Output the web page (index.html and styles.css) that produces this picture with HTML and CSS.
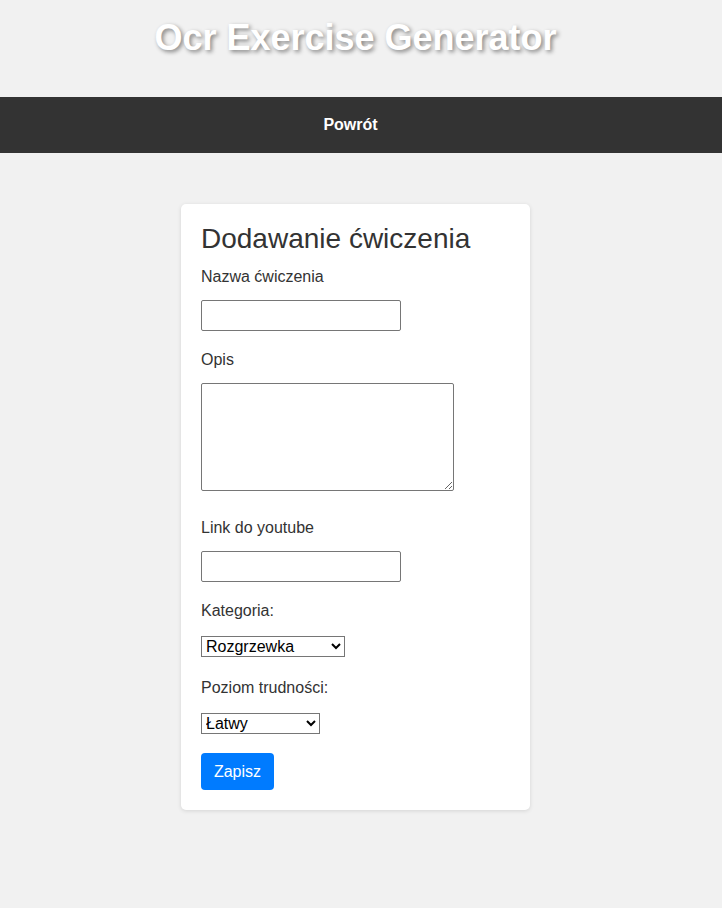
FILE: index.html
```html
<!DOCTYPE html>
<html lang="pl">
<head>
<meta charset="utf-8">
<title>Ocr Exercise Generator</title>
<link rel="stylesheet" href="styles.css">
</head>
<body>
<header class="header">
  <h1 class="title">Ocr Exercise Generator</h1>
</header>
<nav class="nav">
  <a class="nav-link" href="#">Powrót</a>
</nav>
<main class="main">
  <form class="card">
    <h2 class="card-title">Dodawanie ćwiczenia</h2>
    <label class="label l-first">Nazwa ćwiczenia</label>
    <input class="input" type="text">
    <label class="label l-after-input">Opis</label>
    <textarea class="textarea"></textarea>
    <label class="label l-after-textarea">Link do youtube</label>
    <input class="input" type="text">
    <label class="label l-after-input">Kategoria:</label>
    <select class="select select-cat"><option>Rozgrzewka</option></select>
    <label class="label l-after-select">Poziom trudności:</label>
    <select class="select select-level"><option>Łatwy</option></select>
    <button class="button" type="button">Zapisz</button>
  </form>
</main>
</body>
</html>
```
FILE: styles.css
```css
html, body {
  margin: 0;
  padding: 0;
}
body {
  background: #f1f1f1;
  font-family: "Liberation Sans", Arial, sans-serif;
  color: #333;
  height: 908px;
}
.header {
  padding-right: 11px;
  height: 97px;
  box-sizing: border-box;
  padding-top: 18px;
}
.title {
  margin: 0;
  text-align: center;
  color: #fff;
  font-size: 36px;
  font-weight: bold;
  line-height: 40px;
  text-shadow: 2px 2px 4px rgba(0, 0, 0, 0.45);
}
.nav {
  background: #333;
  height: 56px;
  display: flex;
  align-items: center;
  justify-content: center;
  padding-right: 21px;
}
.nav-link {
  color: #fff;
  font-weight: bold;
  font-size: 16px;
  text-decoration: none;
}
.main {
  padding-right: 11px;
  padding-top: 51px;
  display: flex;
  justify-content: center;
}
.card {
  width: 349px;
  box-sizing: border-box;
  background: #fff;
  border-radius: 5px;
  box-shadow: 0 1px 4px rgba(0, 0, 0, 0.12);
  padding: 20px 20px 20px;
  display: flex;
  flex-direction: column;
  align-items: flex-start;
}
.card-title {
  margin: 0;
  font-size: 28px;
  font-weight: normal;
  line-height: 30px;
  color: #333;
}
.label {
  display: block;
  font-size: 16px;
  line-height: 18px;
  color: #333;
}
.l-first { margin-top: 14px; }
.l-after-input { margin-top: 20px; }
.l-after-textarea { margin-top: 28px; }
.l-after-select { margin-top: 22px; }
.input {
  margin: 14px 0 0;
  width: 200px;
  height: 31px;
  box-sizing: border-box;
  border: 1px solid #767676;
  border-radius: 2px;
  background: #fff;
  padding: 2px 4px;
  font-size: 14px;
}
.textarea {
  margin: 14px 0 0;
  width: 253px;
  height: 108px;
  box-sizing: border-box;
  border: 1px solid #767676;
  border-radius: 2px;
  background: #fff;
  font-family: "Liberation Mono", monospace;
}
.select {
  margin: 16px 0 0;
  height: 21px;
  box-sizing: border-box;
  font-family: "Liberation Sans", Arial, sans-serif;
  font-size: 16px;
  color: #000;
  background: #fff;
  border: 1px solid #767676;
  border-radius: 0;
  padding: 0;
}
.select-cat { width: 144px; }
.select-level { width: 119px; }
.button {
  margin-top: 19px;
  height: 37px;
  width: 73px;
  background: #007bff;
  color: #fff;
  border: none;
  border-radius: 4px;
  font-family: "Liberation Sans", Arial, sans-serif;
  font-size: 16px;
  padding: 0;
}
```
